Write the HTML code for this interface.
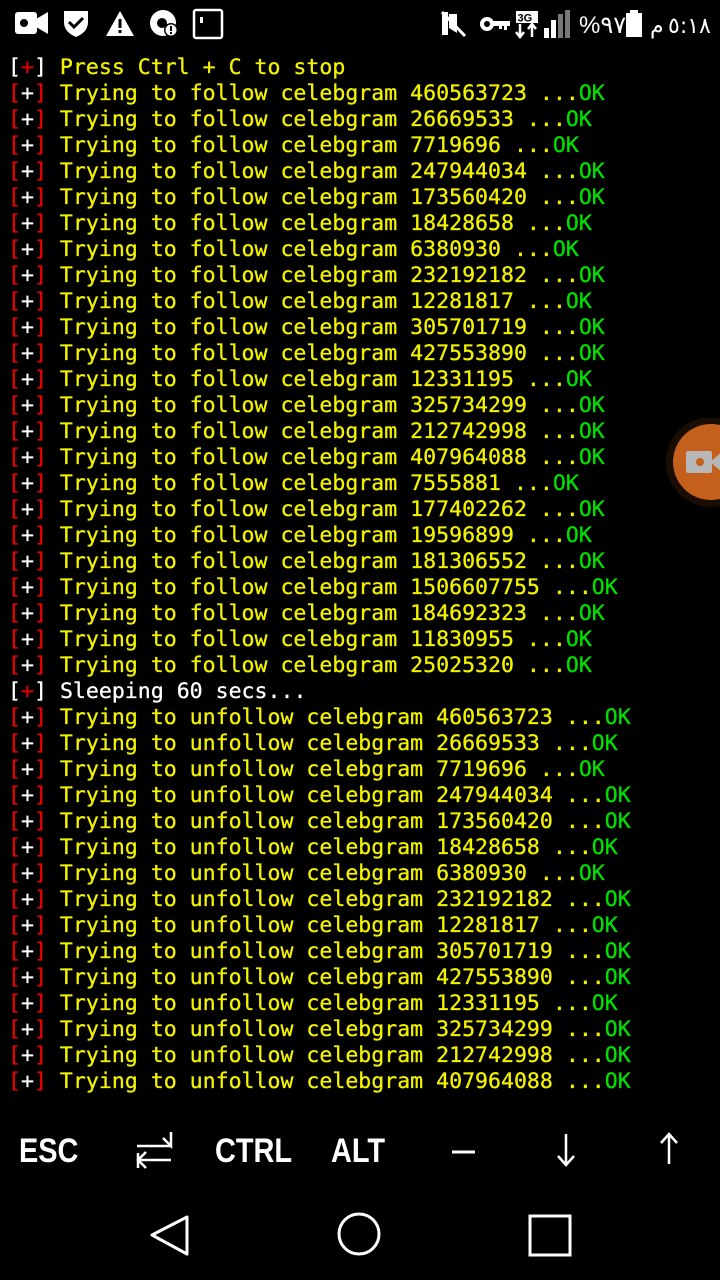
<!DOCTYPE html>
<html><head><meta charset="utf-8"><style>
html,body{margin:0;padding:0;background:#000;width:720px;height:1280px;overflow:hidden;position:relative}
pre{position:absolute;left:8px;top:55px;margin:0;font-family:"DejaVu Sans Mono","Liberation Mono",monospace;font-size:21.55px;line-height:26px;color:#f2f200;font-weight:normal;-webkit-text-stroke:0.3px currentColor}
.r{color:#e80000}.w{color:#fff}.g{color:#00e000}
.sb{position:absolute;top:0;left:0;width:720px;height:48px}
.keys{position:absolute;top:1128px;left:0;width:720px;height:48px;font-family:"Liberation Sans","DejaVu Sans",sans-serif;color:#fff;font-size:34px;font-weight:bold}
.keys span{position:absolute;top:4px;transform:scaleX(0.85);transform-origin:left}
</style></head><body>
<svg class="sb" width="720" height="48" viewBox="0 0 720 48">
<g fill="#fff">
<rect x="15" y="12" width="22" height="22" rx="3"/><polygon points="36,19 48,12 48,34 36,27"/><circle cx="24" cy="23" r="4" fill="#000"/>
<path d="M64 11 L88 11 L88 22 Q88 32 76 37 Q64 32 64 22Z"/><path d="M69 22 L74 27 L83 18" stroke="#000" stroke-width="3" fill="none"/>
<polygon points="120,11 134,36 106,36"/><rect x="118.5" y="19" width="3" height="9" fill="#000"/><rect x="118.5" y="30" width="3" height="3" fill="#000"/>
<circle cx="163" cy="23" r="13"/><circle cx="162" cy="23" r="5" fill="#000"/><circle cx="171" cy="30" r="7" fill="#000"/><circle cx="171" cy="30" r="5.5"/><rect x="170" y="26" width="2" height="5" fill="#000"/><rect x="170" y="32" width="2" height="2" fill="#000"/>
<rect x="194" y="10" width="28" height="28" rx="2" fill="none" stroke="#fff" stroke-width="2.5"/><rect x="200" y="17" width="3" height="6"/>
<path d="M442 12 L448 12 L448 35 L442 35Z M449 14 L457 14 L457 33 L449 28Z"/><path d="M442 12 L465 36" stroke="#fff" stroke-width="3"/>
<circle cx="487" cy="24" r="7"/><circle cx="487" cy="24" r="3" fill="#000"/><rect x="493" y="21" width="17" height="5"/><rect x="504" y="24" width="3" height="6"/><rect x="499" y="24" width="3" height="5"/>
<rect x="516" y="11" width="22" height="12"/><text x="517.5" y="21.5" font-family="Liberation Sans" font-size="11" font-weight="bold" fill="#000">3G</text>
<path d="M520 24 L520 36 M516 32 L520 37 L524 32 M532 37 L532 25 M528 29 L532 24 L536 29" stroke="#fff" stroke-width="2.5" fill="none"/>
<rect x="544" y="28" width="5" height="10"/><rect x="551" y="20" width="5" height="18"/><rect x="558" y="14" width="5" height="24" fill="#777"/><rect x="565" y="10" width="5" height="28" fill="#777"/>
<text x="579" y="33" font-family="Liberation Sans,DejaVu Sans" font-size="24">%٩٧</text>
<rect x="626" y="13" width="16" height="24"/><rect x="630" y="10" width="8" height="3"/>
<text x="650" y="33" font-family="DejaVu Sans" font-size="22">م</text>
<text x="668" y="33" font-family="DejaVu Sans" font-size="22">٥:١٨</text>
</g></svg>
<pre><span class="w">[</span><span class="r">+</span><span class="w">]</span> Press Ctrl + C to stop
<span class="r">[</span><span class="w">+</span><span class="r">]</span> Trying to follow celebgram 460563723 ...<span class="g">OK</span>
<span class="r">[</span><span class="w">+</span><span class="r">]</span> Trying to follow celebgram 26669533 ...<span class="g">OK</span>
<span class="r">[</span><span class="w">+</span><span class="r">]</span> Trying to follow celebgram 7719696 ...<span class="g">OK</span>
<span class="r">[</span><span class="w">+</span><span class="r">]</span> Trying to follow celebgram 247944034 ...<span class="g">OK</span>
<span class="r">[</span><span class="w">+</span><span class="r">]</span> Trying to follow celebgram 173560420 ...<span class="g">OK</span>
<span class="r">[</span><span class="w">+</span><span class="r">]</span> Trying to follow celebgram 18428658 ...<span class="g">OK</span>
<span class="r">[</span><span class="w">+</span><span class="r">]</span> Trying to follow celebgram 6380930 ...<span class="g">OK</span>
<span class="r">[</span><span class="w">+</span><span class="r">]</span> Trying to follow celebgram 232192182 ...<span class="g">OK</span>
<span class="r">[</span><span class="w">+</span><span class="r">]</span> Trying to follow celebgram 12281817 ...<span class="g">OK</span>
<span class="r">[</span><span class="w">+</span><span class="r">]</span> Trying to follow celebgram 305701719 ...<span class="g">OK</span>
<span class="r">[</span><span class="w">+</span><span class="r">]</span> Trying to follow celebgram 427553890 ...<span class="g">OK</span>
<span class="r">[</span><span class="w">+</span><span class="r">]</span> Trying to follow celebgram 12331195 ...<span class="g">OK</span>
<span class="r">[</span><span class="w">+</span><span class="r">]</span> Trying to follow celebgram 325734299 ...<span class="g">OK</span>
<span class="r">[</span><span class="w">+</span><span class="r">]</span> Trying to follow celebgram 212742998 ...<span class="g">OK</span>
<span class="r">[</span><span class="w">+</span><span class="r">]</span> Trying to follow celebgram 407964088 ...<span class="g">OK</span>
<span class="r">[</span><span class="w">+</span><span class="r">]</span> Trying to follow celebgram 7555881 ...<span class="g">OK</span>
<span class="r">[</span><span class="w">+</span><span class="r">]</span> Trying to follow celebgram 177402262 ...<span class="g">OK</span>
<span class="r">[</span><span class="w">+</span><span class="r">]</span> Trying to follow celebgram 19596899 ...<span class="g">OK</span>
<span class="r">[</span><span class="w">+</span><span class="r">]</span> Trying to follow celebgram 181306552 ...<span class="g">OK</span>
<span class="r">[</span><span class="w">+</span><span class="r">]</span> Trying to follow celebgram 1506607755 ...<span class="g">OK</span>
<span class="r">[</span><span class="w">+</span><span class="r">]</span> Trying to follow celebgram 184692323 ...<span class="g">OK</span>
<span class="r">[</span><span class="w">+</span><span class="r">]</span> Trying to follow celebgram 11830955 ...<span class="g">OK</span>
<span class="r">[</span><span class="w">+</span><span class="r">]</span> Trying to follow celebgram 25025320 ...<span class="g">OK</span>
<span class="w">[</span><span class="r">+</span><span class="w">]</span> <span class="w">Sleeping 60 secs...</span>
<span class="r">[</span><span class="w">+</span><span class="r">]</span> Trying to unfollow celebgram 460563723 ...<span class="g">OK</span>
<span class="r">[</span><span class="w">+</span><span class="r">]</span> Trying to unfollow celebgram 26669533 ...<span class="g">OK</span>
<span class="r">[</span><span class="w">+</span><span class="r">]</span> Trying to unfollow celebgram 7719696 ...<span class="g">OK</span>
<span class="r">[</span><span class="w">+</span><span class="r">]</span> Trying to unfollow celebgram 247944034 ...<span class="g">OK</span>
<span class="r">[</span><span class="w">+</span><span class="r">]</span> Trying to unfollow celebgram 173560420 ...<span class="g">OK</span>
<span class="r">[</span><span class="w">+</span><span class="r">]</span> Trying to unfollow celebgram 18428658 ...<span class="g">OK</span>
<span class="r">[</span><span class="w">+</span><span class="r">]</span> Trying to unfollow celebgram 6380930 ...<span class="g">OK</span>
<span class="r">[</span><span class="w">+</span><span class="r">]</span> Trying to unfollow celebgram 232192182 ...<span class="g">OK</span>
<span class="r">[</span><span class="w">+</span><span class="r">]</span> Trying to unfollow celebgram 12281817 ...<span class="g">OK</span>
<span class="r">[</span><span class="w">+</span><span class="r">]</span> Trying to unfollow celebgram 305701719 ...<span class="g">OK</span>
<span class="r">[</span><span class="w">+</span><span class="r">]</span> Trying to unfollow celebgram 427553890 ...<span class="g">OK</span>
<span class="r">[</span><span class="w">+</span><span class="r">]</span> Trying to unfollow celebgram 12331195 ...<span class="g">OK</span>
<span class="r">[</span><span class="w">+</span><span class="r">]</span> Trying to unfollow celebgram 325734299 ...<span class="g">OK</span>
<span class="r">[</span><span class="w">+</span><span class="r">]</span> Trying to unfollow celebgram 212742998 ...<span class="g">OK</span>
<span class="r">[</span><span class="w">+</span><span class="r">]</span> Trying to unfollow celebgram 407964088 ...<span class="g">OK</span></pre>
<svg style="position:absolute;left:660px;top:418px" width="60" height="90" viewBox="660 418 60 90">
<circle cx="711" cy="462" r="45" fill="#1a0d05"/><circle cx="711" cy="462" r="38" fill="#c45f1c"/>
<rect x="686" y="451" width="26" height="22" rx="2" fill="#b7b7b7"/><polygon points="710,462 722,452 722,472" fill="#b7b7b7"/><circle cx="700" cy="462" r="4" fill="#c45f1c"/>
</svg>
<div class="keys">
<span style="left:19px">ESC</span>
<span style="left:215px">CTRL</span>
<span style="left:331px">ALT</span>
</div>
<svg style="position:absolute;left:0;top:1120px" width="720" height="160">
<g stroke="#fff" stroke-width="2.5" fill="none">
<path d="M137 26 L171 26 M163 18 L171 26 L171 12"/>
<path d="M171 40 L138 40 M146 32 L138 40 L146 48 M138 33 L138 48"/>
<path d="M452 32 L475 32" stroke-width="3"/>
<path d="M566 14 L566 44 M558 36 L566 45 L574 36"/>
<path d="M669 14 L669 44 M661 23 L669 14 L677 23"/>
<path d="M187 97 L152 115 L187 134 Z" stroke-width="3" stroke-linejoin="round"/>
<circle cx="359" cy="114" r="20" stroke-width="3"/>
<rect x="530" y="96" width="40" height="39" stroke-width="3"/>
</g></svg>
</body></html>
